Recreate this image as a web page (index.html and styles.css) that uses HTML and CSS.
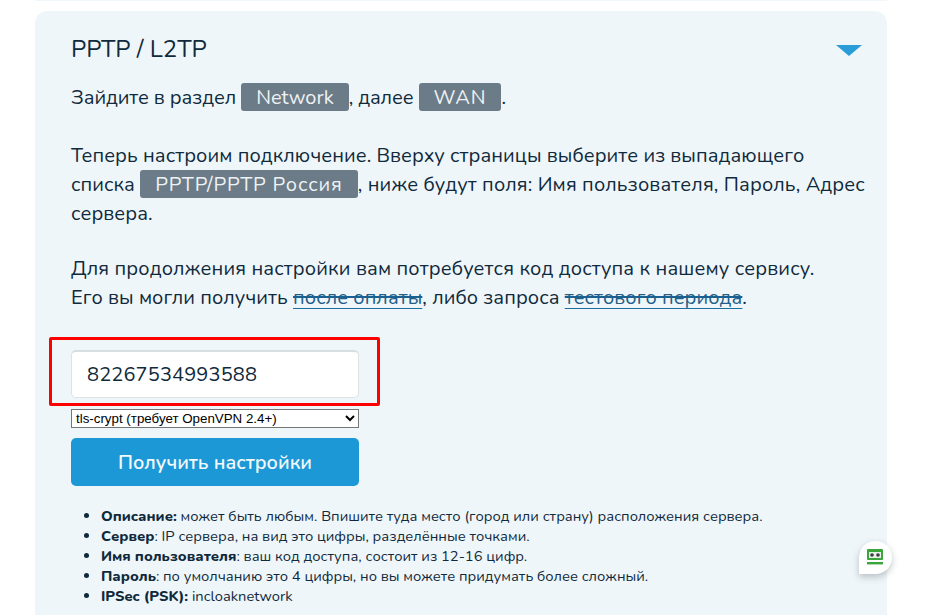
FILE: index.html
```html
<!DOCTYPE html>
<html lang="ru">
<head>
    <meta charset="UTF-8">
    <meta name="viewport" content="width=device-width, initial-scale=1.0">
    <title>PPTP / L2TP</title>
    <link rel="stylesheet" href="styles.css">
</head>
<body>
    <div class="prev-card"></div>
    <div class="card">
        <div class="card-head">
            <h3>PPTP / L2TP</h3>
            <span class="arrow"></span>
        </div>
        <p class="text text-first">
            Зайдите в раздел <span class="tag">Network</span>, далее <span class="tag tag-caps">WAN</span>.
        </p>
        <p class="text text-second">
            Теперь настроим подключение. Вверху страницы выберите из выпадающего<br>
            списка <span class="tag tag-caps">PPTP/PPTP Россия</span><span class="wide">, ниже будут поля: Имя пользователя, Пароль, Адрес</span><br>
            сервера.
        </p>
        <p class="text text-third">
            Для продолжения настройки вам потребуется код доступа к нашему сервису.<br>
            <span class="tight">Его вы могли получить <a href="#"><s>после оплаты</s></a>, либо запроса <a href="#"><s>тестового периода</s></a>.</span>
        </p>
        <form class="code-form">
            <div class="code-wrap">
                <input class="code" type="text" value="82267534993588">
                <span class="highlight"></span>
            </div>
            <select class="tls">
                <option>tls-crypt (требует OpenVPN 2.4+)</option>
            </select>
            <button class="submit" type="button">Получить настройки</button>
        </form>
        <ul class="notes">
            <li><b>Описание:</b> может быть любым. Впишите туда место (город или страну) расположения сервера.</li>
            <li><b>Сервер</b>: IP сервера, на вид это цифры, разделённые точками.</li>
            <li><b>Имя пользователя</b>: ваш код доступа, состоит из 12-16 цифр.</li>
            <li><b>Пароль</b>: по умолчанию это 4 цифры, но вы можете придумать более сложный.</li>
            <li><b>IPSec (PSK):</b> incloaknetwork</li>
        </ul>
    </div>

    <div class="robo-badge">
        <svg width="20" height="18" viewBox="0 0 20 18">
            <rect x="1" y="0" width="16" height="11" rx="1" fill="#3aa53a"/>
            <rect x="3" y="3" width="12" height="6" fill="#e8f0e8"/>
            <circle cx="6" cy="6" r="1.8" fill="#3c3c44"/>
            <circle cx="12" cy="6" r="1.8" fill="#3c3c44"/>
            <rect x="1" y="13" width="16" height="2.4" fill="#3aa53a"/>
        </svg>
    </div>
</body>
</html>
```

FILE: styles.css
```css
html, body {
    height: 615px;
    overflow: hidden;
}
body {
    margin: 0;
    background: #fff;
    font-family: "Nunito", sans-serif;
    color: #0f2a3c;
}
.prev-card {
    height: 1px;
    margin: 0 57px 0 35px;
    background: #f0f7fb;
}
.card {
    margin: 10px 57px 0 35px;
    padding: 22px 25px 0 36px;
    height: 600px;
    background: #eff6fa;
    border-radius: 12px;
}
.card-head {
    display: flex;
    justify-content: space-between;
    align-items: center;
    height: 32px;
}
h3 {
    margin: 0;
    font-size: 24px;
    font-weight: 400;
}
.arrow {
    width: 0;
    height: 0;
    border-left: 13px solid transparent;
    border-right: 13px solid transparent;
    border-top: 11px solid #2a9dd8;
    margin-top: 2px;
}
.text {
    margin: 0;
    font-size: 20px;
    line-height: 29px;
    white-space: nowrap;
}
.text-first {
    margin-top: 18px;
    letter-spacing: -0.1px;
}
.text-second {
    margin-top: 29px;
    letter-spacing: 0.06px;
}
.text-third {
    margin-top: 26px;
    letter-spacing: 0.14px;
}
.wide {
    letter-spacing: 0.13px;
}
.tight {
    letter-spacing: 0.05px;
}
.tag {
    display: inline-block;
    height: 28px;
    line-height: 30px;
    padding: 0 15px;
    background: #6b7b87;
    color: #eef2f4;
    border-radius: 3px;
    letter-spacing: 0;
}
.tag-caps {
    letter-spacing: 0.85px;
}
a {
    color: #235f88;
    text-decoration: underline;
    text-decoration-color: #1a6ea0;
    text-decoration-thickness: 1px;
    text-underline-offset: 4px;
}
s {
    text-decoration-color: #1a6090;
    text-decoration-thickness: 1.5px;
}
.code-form {
    width: 288px;
    margin-top: 38px;
    display: flex;
    flex-direction: column;
}
.code-wrap {
    position: relative;
}
.code {
    box-sizing: border-box;
    display: block;
    width: 100%;
    height: 48px;
    padding: 0 15px;
    border: 1px solid #dde2e4;
    border-top: 2px solid #d8dddf;
    border-radius: 5px;
    background: #fff;
    font: 400 20px "Nunito", sans-serif;
    letter-spacing: 0.15px;
    color: #0f2a3c;
}
.highlight {
    position: absolute;
    left: -22px;
    top: -13px;
    width: 325px;
    height: 63px;
    border: 3px solid #f00;
    border-radius: 2px;
}
.tls {
    margin-top: 11px;
    height: 19px;
    width: 100%;
    padding: 0;
    font: 13.33px "Liberation Sans", sans-serif;
    background: #fff;
}
.submit {
    margin-top: 10px;
    height: 48px;
    border: none;
    border-radius: 5px;
    background: #1c98d6;
    color: #f2f8fb;
    font: 600 19.7px "Nunito", sans-serif;
}
.notes {
    margin: 20px 0 0;
    padding: 0 0 0 30px;
    font-size: 14.7px;
    line-height: 20px;
}
.notes b {
    font-weight: 800;
}
.robo-badge {
    position: absolute;
    left: 859px;
    top: 541px;
    width: 33px;
    height: 33px;
    display: flex;
    align-items: center;
    justify-content: center;
    background: #fff;
    border-radius: 50% 50% 50% 0;
    box-shadow: 0 3px 7px rgba(60, 70, 80, 0.3);
}
```
